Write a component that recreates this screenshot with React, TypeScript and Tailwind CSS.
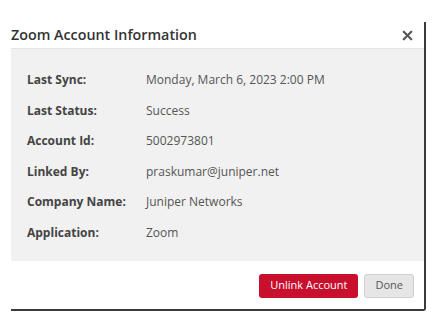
import { X } from "lucide-react";

const ROWS: [string, string][] = [
  ["Last Sync:", "Monday, March 6, 2023 2:00 PM"],
  ["Last Status:", "Success"],
  ["Account Id:", "5002973801"],
  ["Linked By:", "praskumar@juniper.net"],
  ["Company Name:", "Juniper Networks"],
  ["Application:", "Zoom"],
];

export default function App() {
  return (
    <div className="w-[441px] h-[328px] bg-white pt-[22px] pl-[11px] font-['Open_Sans',sans-serif]">
      <div className="w-[415px] bg-white border-r-2 border-b-2 border-[#3a3a3a] rounded-br-[3px]">
        {/* header */}
        <div className="h-[26px] flex items-center justify-between pr-[9px]">
          <h2 className="text-[14.3px] font-semibold text-[#333]">Zoom Account Information</h2>
          <X className="w-[15px] h-[15px] text-[#555]" strokeWidth={3.5} />
        </div>
        {/* body */}
        <div className="bg-[#f1f1f1] border-t border-[#e4e4e4] pl-[16px] pt-[21px] pb-[19px] flex flex-col gap-[11.5px]">
          {ROWS.map(([k, v]) => (
            <div key={k} className="flex text-[12px] leading-[19px]">
              <span className="w-[119px] font-bold text-[#444]">{k}</span>
              <span className="text-[#555]">{v}</span>
            </div>
          ))}
        </div>
        {/* footer */}
        <div className="flex justify-end gap-[6px] pr-[10px] pt-[13px] pb-[11px]">
          <button className="h-[24px] px-[11px] rounded-[3px] bg-[#c8102e] text-white text-[11px]">Unlink Account</button>
          <button className="h-[24px] px-[10px] rounded-[3px] bg-[#e6e6e6] border border-[#cfcfcf] text-[#555] text-[11px]">Done</button>
        </div>
      </div>
    </div>
  );
}
